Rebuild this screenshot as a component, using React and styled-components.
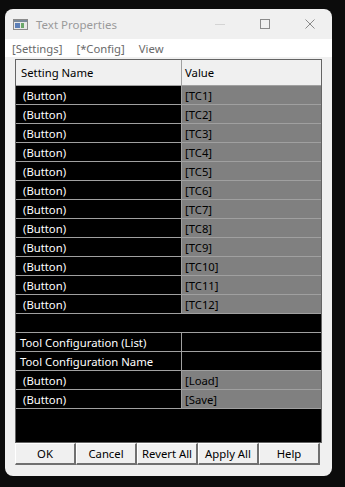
import React from "react";
import styled, { createGlobalStyle } from "styled-components";

const Global = createGlobalStyle`
  html, body { margin: 0; padding: 0; background: #0c0c0c; }
  body { font-family: "Noto Sans", "DejaVu Sans", sans-serif; font-size: 11.3px; }
`;

const Page = styled.div`
  padding: 9px 0 0 5px;
`;

const Window = styled.div`
  width: 327px;
  height: 467px;
  background: #f0f0f0;
  border-radius: 8px;
  overflow: hidden;
  display: flex;
  flex-direction: column;
  box-sizing: border-box;
`;

const TitleBar = styled.div`
  height: 30px;
  display: flex;
  align-items: center;
  padding-left: 8px;
  color: #9a9a9a;
  font-size: 11.5px;
`;

const TitleText = styled.span`
  margin-left: 8px;
  flex: 1;
`;

const Caption = styled.div`
  width: 45px;
  height: 30px;
  display: flex;
  align-items: center;
  justify-content: center;
`;

const MenuBar = styled.div`
  height: 18px;
  background: #ffffff;
  display: flex;
  align-items: center;
  padding-left: 7px;
  gap: 14px;
  color: #6a6a6a;
`;

const Content = styled.div`
  padding: 2px 10px 0 10px;
  display: flex;
  flex-direction: column;
`;

const Grid = styled.div`
  width: 307px;
  height: 384px;
  box-sizing: border-box;
  border: 1px solid #646464;
  background: #000;
  display: flex;
  flex-direction: column;
`;

const Row = styled.div`
  display: flex;
  height: ${(p) => (p.$header ? 26 : 19)}px;
  box-sizing: border-box;
  border-bottom: 1px solid #a0a0a0;
  background: ${(p) => (p.$header ? "#f0f0f0" : "#000")};
`;

const NameCell = styled.div`
  width: 166px;
  box-sizing: border-box;
  border-right: ${(p) => (p.$span ? "none" : "1px solid #a0a0a0")};
  padding-left: ${(p) => p.$indent}px;
  display: flex;
  align-items: center;
  color: ${(p) => (p.$header ? "#000" : "#fff")};
  white-space: nowrap;
`;

const ValueCell = styled.div`
  flex: 1;
  padding-left: 3px;
  display: flex;
  align-items: center;
  background: ${(p) => (p.$grey ? "#808080" : "transparent")};
  color: #000;
  white-space: nowrap;
`;

const ButtonRow = styled.div`
  display: flex;
  height: 22px;
`;

const Button = styled.div`
  width: 61px;
  height: 22px;
  box-sizing: border-box;
  border-style: solid;
  border-width: 1px 2px 2px 1px;
  border-color: #ffffff #707070 #707070 #ffffff;
  background: #f0f0f0;
  display: flex;
  align-items: center;
  justify-content: center;
  color: #000;
`;

const tcRows = Array.from({ length: 12 }, (_, i) => `[TC${i + 1}]`);

export default function App() {
  return (
    <>
      <Global />
      <Page>
        <Window>
          <TitleBar>
            <svg width="15" height="11" viewBox="0 0 15 11">
              <rect x="0.5" y="0.5" width="14" height="10" fill="#e8e8e8" stroke="#8a8a8a" />
              <rect x="1" y="1" width="13" height="2" fill="#7a8a9a" />
              <rect x="2" y="4" width="5" height="5" fill="#5b7fb8" />
              <rect x="8" y="4" width="3" height="5" fill="#6aa86a" />
            </svg>
            <TitleText>Text Properties</TitleText>
            <Caption>
              <svg width="10" height="1" viewBox="0 0 10 1">
                <rect width="10" height="1" fill="#d4d4d4" />
              </svg>
            </Caption>
            <Caption>
              <svg width="10" height="10" viewBox="0 0 10 10">
                <rect x="0.5" y="0.5" width="9" height="9" fill="none" stroke="#8a8a8a" />
              </svg>
            </Caption>
            <Caption>
              <svg width="10" height="10" viewBox="0 0 10 10">
                <path d="M0.5 0.5 L9.5 9.5 M9.5 0.5 L0.5 9.5" stroke="#8a8a8a" strokeWidth="1" />
              </svg>
            </Caption>
          </TitleBar>
          <MenuBar>
            <span>[Settings]</span>
            <span>[*Config]</span>
            <span>View</span>
          </MenuBar>
          <Content>
            <Grid>
              <Row $header>
                <NameCell $header $indent={5}>Setting Name</NameCell>
                <ValueCell>Value</ValueCell>
              </Row>
              {tcRows.map((v) => (
                <Row key={v}>
                  <NameCell $indent={7}>(Button)</NameCell>
                  <ValueCell $grey>{v}</ValueCell>
                </Row>
              ))}
              <Row>
                <NameCell $span $indent={4} />
              </Row>
              <Row>
                <NameCell $indent={4}>Tool Configuration (List)</NameCell>
                <ValueCell />
              </Row>
              <Row>
                <NameCell $indent={4}>Tool Configuration Name</NameCell>
                <ValueCell />
              </Row>
              <Row>
                <NameCell $indent={7}>(Button)</NameCell>
                <ValueCell $grey>[Load]</ValueCell>
              </Row>
              <Row>
                <NameCell $indent={7}>(Button)</NameCell>
                <ValueCell $grey>[Save]</ValueCell>
              </Row>
            </Grid>
            <ButtonRow>
              <Button>OK</Button>
              <Button>Cancel</Button>
              <Button>Revert All</Button>
              <Button>Apply All</Button>
              <Button>Help</Button>
            </ButtonRow>
          </Content>
        </Window>
      </Page>
    </>
  );
}
